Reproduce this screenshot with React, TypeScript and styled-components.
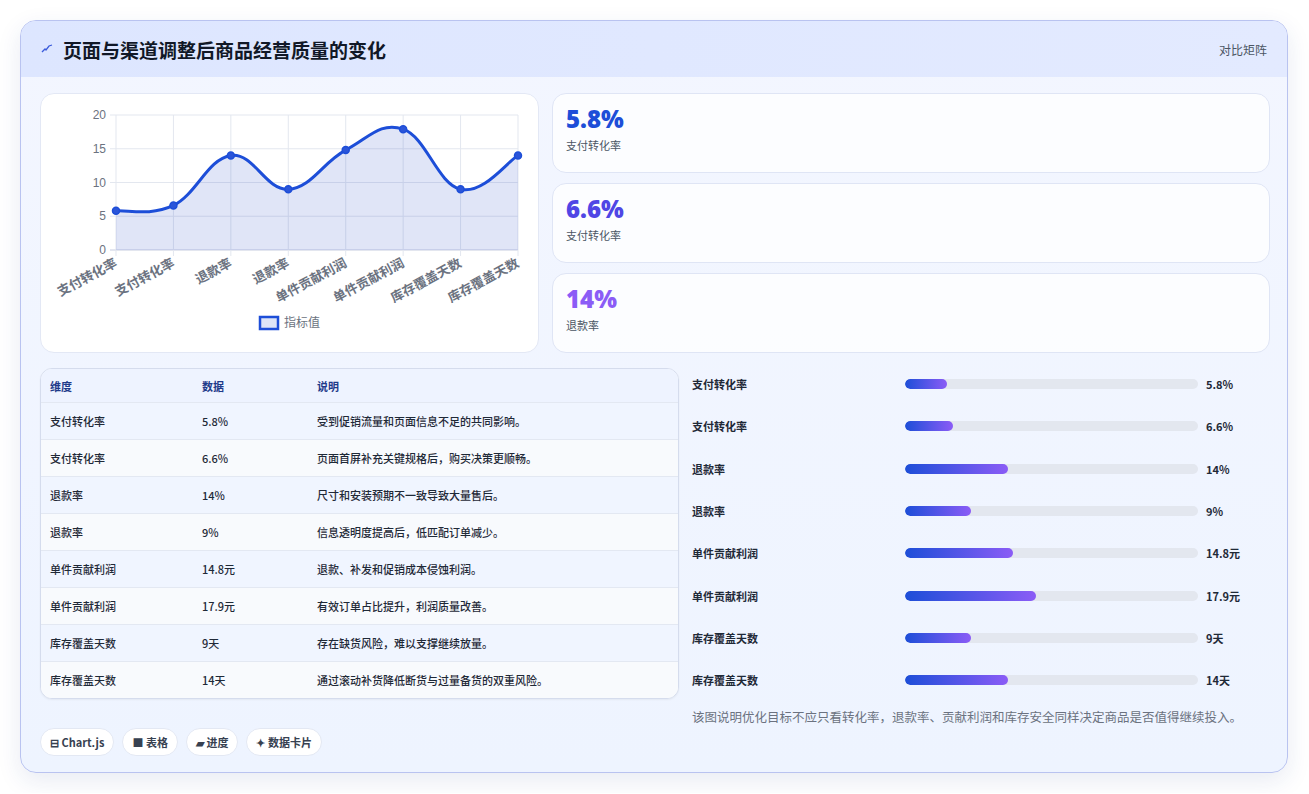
import React from "react";
import styled, { createGlobalStyle } from "styled-components";

const Global = createGlobalStyle`
  body { margin: 0; background: #fff; font-family: "Noto Sans CJK SC", "Noto Sans", sans-serif; }
`;

const rows = [
  ["支付转化率", "5.8%", 5.8, "受到促销流量和页面信息不足的共同影响。"],
  ["支付转化率", "6.6%", 6.6, "页面首屏补充关键规格后，购买决策更顺畅。"],
  ["退款率", "14%", 14, "尺寸和安装预期不一致导致大量售后。"],
  ["退款率", "9%", 9, "信息透明度提高后，低匹配订单减少。"],
  ["单件贡献利润", "14.8元", 14.8, "退款、补发和促销成本侵蚀利润。"],
  ["单件贡献利润", "17.9元", 17.9, "有效订单占比提升，利润质量改善。"],
  ["库存覆盖天数", "9天", 9, "存在缺货风险，难以支撑继续放量。"],
  ["库存覆盖天数", "14天", 14, "通过滚动补货降低断货与过量备货的双重风险。"],
] as const;

const Page = styled.div`
  padding: 20px;
`;
const Card = styled.div`
  width: 1268px;
  height: 753px;
  box-sizing: border-box;
  border: 1px solid #b9c3f0;
  border-radius: 16px;
  background: linear-gradient(180deg, #f3f6ff, #eef4ff);
  box-shadow: 0 8px 24px rgba(30, 60, 140, 0.1);
  overflow: hidden;
`;
const Header = styled.div`
  height: 56px;
  display: flex;
  align-items: center;
  justify-content: space-between;
  padding: 0 20px;
  background: linear-gradient(90deg, #dde6ff, #e3eaff);
`;
const Title = styled.h1`
  margin: 0;
  font-size: 19px;
  font-weight: 700;
  color: #111827;
  display: flex;
  align-items: center;
  gap: 10px;
`;
const HeaderRight = styled.span`
  font-size: 12px;
  color: #4b5563;
`;
const Body = styled.div`
  padding: 16px 19px 0 19px;
  display: flex;
  flex-direction: column;
  gap: 15px;
`;
const TopRow = styled.div`
  display: grid;
  grid-template-columns: 499px 718px;
  column-gap: 13px;
`;
const BottomRow = styled.div`
  display: grid;
  grid-template-columns: 639px 578px;
  column-gap: 13px;
`;
const ChartCard = styled.div`
  height: 260px;
  box-sizing: border-box;
  background: #fff;
  border: 1px solid #e3e8f5;
  border-radius: 14px;
`;
const Kpis = styled.div`
  display: flex;
  flex-direction: column;
  gap: 10px;
`;
const Kpi = styled.div`
  height: 80px;
  box-sizing: border-box;
  background: rgba(255, 255, 255, 0.75);
  border: 1px solid #dfe5f5;
  border-radius: 14px;
  padding: 9px 13px;
`;
const KpiVal = styled.div<{ c: string }>`
  font-family: "Open Sans", "Noto Sans", sans-serif;
  font-size: 24px;
  font-weight: 800;
  color: ${(p) => p.c};
  line-height: 32px;
`;
const KpiLabel = styled.div`
  font-size: 11px;
  color: #4b5563;
  margin-top: 2px;
`;
const Left = styled.div`
  display: flex;
  flex-direction: column;
  gap: 29px;
`;
const Table = styled.div`
  border: 1px solid #d5dced;
  border-radius: 12px;
  overflow: hidden;
  background: #fff;
  box-shadow: 0 1px 2px rgba(0, 0, 0, 0.05);
`;
const Row = styled.div<{ head?: boolean; alt?: boolean }>`
  display: grid;
  grid-template-columns: 152px 115px 1fr;
  box-sizing: border-box;
  height: ${(p) => (p.head ? 33 : 37)}px;
  align-items: center;
  padding-left: 9px;
  font-size: 11px;
  font-weight: ${(p) => (p.head ? 600 : 500)};
  color: ${(p) => (p.head ? "#1e3a8a" : "#1f2937")};
  background: ${(p) => (p.head ? "#eef3ff" : p.alt ? "#f8fafd" : "#f0f5ff")};
  border-top: ${(p) => (p.head ? "none" : "1px solid #e3e8f2")};
`;
const Chips = styled.div`
  display: flex;
  gap: 8px;
`;
const Chip = styled.span`
  height: 28px;
  box-sizing: border-box;
  padding: 0 9px;
  border-radius: 14px;
  background: #fff;
  border: 1px solid #e3e8f3;
  display: inline-flex;
  align-items: center;
  gap: 4px;
  font-size: 11px;
  font-weight: 600;
  color: #374151;
`;
const Right = styled.div`
  display: flex;
  flex-direction: column;
  margin-top: -5px;
`;
const PRow = styled.div`
  display: grid;
  grid-template-columns: 205px 293px 1fr;
  column-gap: 8px;
  height: 42.3px;
  align-items: center;
  font-size: 11px;
  font-weight: 600;
  color: #1f2937;
`;
const Track = styled.div`
  height: 10px;
  border-radius: 5px;
  background: #e3e7ef;
  overflow: hidden;
`;
const Fill = styled.div`
  height: 100%;
  border-radius: 5px;
  background: linear-gradient(90deg, #1d4ed8, #8b5cf6);
`;
const Note = styled.p`
  margin: 6px 0 0;
  font-size: 12.5px;
  color: #6b7280;
`;

const vals = [5.8, 6.6, 14, 9, 14.8, 17.9, 9, 14];
const labels = ["支付转化率", "支付转化率", "退款率", "退款率", "单件贡献利润", "单件贡献利润", "库存覆盖天数", "库存覆盖天数"];

function LineChart() {
  const x0 = 75, x1 = 477, yb = 156, yt = 21;
  const pts = vals.map((v, i) => [x0 + (i * (x1 - x0)) / 7, yb - (v / 20) * (yb - yt)]);
  const t = 0.4;
  let d = `M${pts[0][0]},${pts[0][1]}`;
  for (let i = 0; i < pts.length - 1; i++) {
    const p0 = pts[i - 1] || pts[i], p1 = pts[i], p2 = pts[i + 1], p3 = pts[i + 2] || p2;
    const c1 = [p1[0] + ((p2[0] - p0[0]) * t) / 2, p1[1] + ((p2[1] - p0[1]) * t) / 2];
    const c2 = [p2[0] - ((p3[0] - p1[0]) * t) / 2, p2[1] - ((p3[1] - p1[1]) * t) / 2];
    d += ` C${c1[0]},${c1[1]} ${c2[0]},${c2[1]} ${p2[0]},${p2[1]}`;
  }
  const area = d + ` L${x1},${yb} L${x0},${yb} Z`;
  return (
    <svg width="497" height="258" style={{ display: "block" }}>
      {[0, 5, 10, 15, 20].map((g) => {
        const y = yb - (g / 20) * (yb - yt);
        return (
          <g key={g}>
            <line x1={x0 - 6} x2={x1} y1={y} y2={y} stroke={g === 0 ? "#c7cde0" : "#e3e7ef"} />
            <text x={x0 - 10} y={y + 4} textAnchor="end" fontSize="12" fill="#6b7280" fontFamily="Liberation Sans, sans-serif">{g}</text>
          </g>
        );
      })}
      {pts.map((p, i) => (
        <line key={i} x1={p[0]} x2={p[0]} y1={yt} y2={yb + 6} stroke="#e3e7ef" />
      ))}
      <path d={area} fill="rgba(37,70,200,0.14)" />
      <path d={d} fill="none" stroke="#1d4ed8" strokeWidth="3" />
      {pts.map((p, i) => (
        <circle key={i} cx={p[0]} cy={p[1]} r="3.5" fill="#2b55d9" stroke="#1d4ed8" strokeWidth="1.5" />
      ))}
      {pts.map((p, i) => (
        <text key={i} x={p[0] + 2} y={yb + 16} textAnchor="end" fontSize="13" fill="#6b7280" fontWeight="600"
          transform={`rotate(-28 ${p[0] + 2} ${yb + 16})`}>{labels[i]}</text>
      ))}
      <rect x="219" y="223" width="18" height="12" fill="#dde4f7" stroke="#1d4ed8" strokeWidth="2.5" />
      <text x="243" y="233" fontSize="12" fill="#6b7280">指标值</text>
    </svg>
  );
}

export default function App() {
  return (
    <Page>
      <Global />
      <Card>
        <Header>
          <Title>
            <svg width="12" height="10" viewBox="0 0 12 10"><path d="M1 8 L4 5 L5 6 L8 2 L11 1" stroke="#3b5bdb" strokeWidth="1.3" fill="none" /></svg>
            页面与渠道调整后商品经营质量的变化
          </Title>
          <HeaderRight>对比矩阵</HeaderRight>
        </Header>
        <Body>
          <TopRow>
            <ChartCard><LineChart /></ChartCard>
            <Kpis>
              <Kpi><KpiVal c="#1d4ed8">5.8%</KpiVal><KpiLabel>支付转化率</KpiLabel></Kpi>
              <Kpi><KpiVal c="#4f46e5">6.6%</KpiVal><KpiLabel>支付转化率</KpiLabel></Kpi>
              <Kpi><KpiVal c="#8b5cf6">14%</KpiVal><KpiLabel>退款率</KpiLabel></Kpi>
            </Kpis>
          </TopRow>
          <BottomRow>
            <Left>
              <Table>
                <Row head><span>维度</span><span>数据</span><span>说明</span></Row>
                {rows.map((r, i) => (
                  <Row key={i} alt={i % 2 === 1}><span>{r[0]}</span><span>{r[1]}</span><span>{r[3]}</span></Row>
                ))}
              </Table>
              <Chips>
                <Chip>⊟ Chart.js</Chip>
                <Chip>■ 表格</Chip>
                <Chip>▰ 进度</Chip>
                <Chip>✦ 数据卡片</Chip>
              </Chips>
            </Left>
            <Right>
              {rows.map((r, i) => (
                <PRow key={i}>
                  <span>{r[0]}</span>
                  <Track><Fill style={{ width: `${(r[2] / 40) * 100}%` }} /></Track>
                  <span>{r[1]}</span>
                </PRow>
              ))}
              <Note>该图说明优化目标不应只看转化率，退款率、贡献利润和库存安全同样决定商品是否值得继续投入。</Note>
            </Right>
          </BottomRow>
        </Body>
      </Card>
    </Page>
  );
}
